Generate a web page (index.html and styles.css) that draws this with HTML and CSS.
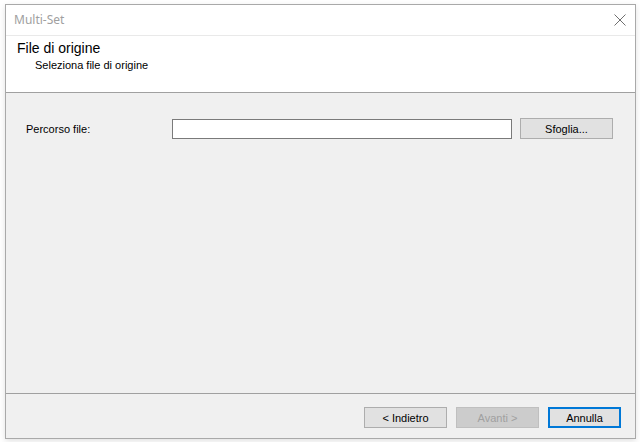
FILE: index.html
```html
<!DOCTYPE html>
<html lang="it">

<head>
  <meta charset="UTF-8">
  <title>Multi-Set</title>
  <link rel="stylesheet" href="styles.css">
</head>

<body>

  <div class="window">
    <div class="titlebar">
      <span class="title">Multi-Set</span>
      <svg class="close" width="12" height="12" viewBox="0 0 12 12">
        <path d="M0.5 0.5 L11.5 11.5 M11.5 0.5 L0.5 11.5" stroke="#6f6f6f" stroke-width="1" fill="none" />
      </svg>
    </div>

    <div class="header">
      <h1 class="header-title">File di origine</h1>
      <p class="header-sub">Seleziona file di origine</p>
    </div>

    <div class="body">
      <div class="row">
        <label class="label">Percorso file:</label>
        <input class="textbox" type="text">
        <button class="btn browse">Sfoglia...</button>
      </div>
    </div>

    <div class="footer">
      <button class="btn nav">&lt; Indietro</button>
      <button class="btn nav disabled">Avanti &gt;</button>
      <button class="btn cancel">Annulla</button>
    </div>
  </div>

</body>

</html>
```

FILE: styles.css
```css
* {
  padding: 0;
  margin: 0;
  box-sizing: border-box;
}

html {
  height: 100%;
}

body {
  height: 100%;
  background-color: #fff;
  padding: 4px 5px;
  font-family: "Liberation Sans", Arial, sans-serif;
  font-size: 11px;
  color: #000;
}

.window {
  width: 631px;
  height: 435px;
  border: 1px solid #a9a9a9;
  box-shadow: 0 2px 6px rgba(0, 0, 0, 0.12);
  display: flex;
  flex-direction: column;
  background-color: #f0f0f0;
}

.titlebar {
  height: 31px;
  background-color: #fff;
  border-bottom: 1px solid #e9e9e9;
  display: flex;
  align-items: center;
  justify-content: space-between;
  padding: 0 9px 2px 8px;
}

.title {
  font-family: "Noto Sans", "Open Sans", sans-serif;
  font-size: 12px;
  color: #a0a0a0;
}

.close {
  display: block;
  margin-top: 2px;
}

/* 白色标题区域 */
.header {
  height: 57px;
  background-color: #fff;
  border-bottom: 1px solid #a0a0a0;
  padding: 4px 0 0 11px;
}

.header-title {
  font-weight: normal;
  font-size: 14px;
  line-height: 16px;
}

.header-sub {
  font-size: 11px;
  line-height: 14px;
  margin: 2px 0 0 18px;
}

.body {
  flex: 1;
  padding: 25px 0 0 20px;
}

.row {
  display: flex;
  align-items: center;
}

.label {
  width: 146px;
}

.textbox {
  width: 340px;
  height: 20px;
  border: 1px solid #7a7a7a;
  background-color: #fff;
  outline: none;
}

.btn {
  height: 21px;
  font-family: "Liberation Sans", Arial, sans-serif;
  font-size: 11px;
  color: #000;
  background-color: #e1e1e1;
  border: 1px solid #adadad;
}

.browse {
  width: 93px;
  margin-left: 8px;
}

.footer {
  height: 45px;
  border-top: 1px solid #a0a0a0;
  display: flex;
  justify-content: flex-end;
  align-items: flex-start;
  gap: 9px;
  padding: 13px 14px 0 0;
}

.nav {
  width: 83px;
}

.nav.disabled {
  background-color: #cccccc;
  border-color: #bfbfbf;
  color: #a0a0a0;
}

.cancel {
  width: 73px;
  border: 2px solid #0078d7;
}
```
